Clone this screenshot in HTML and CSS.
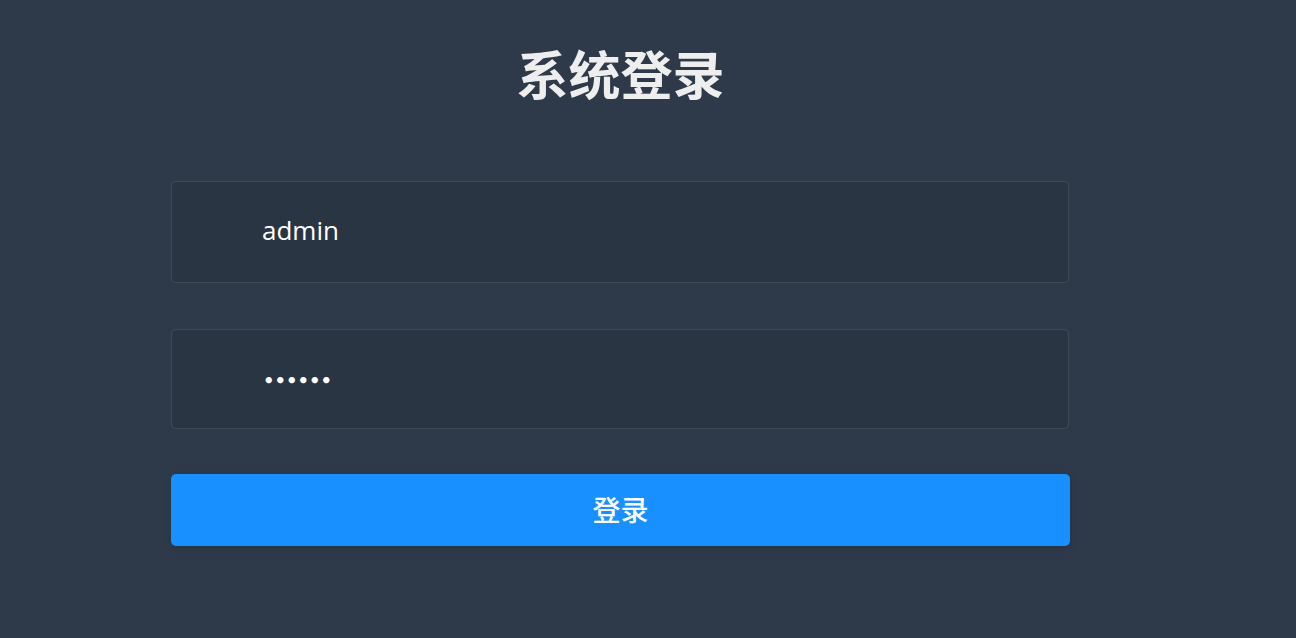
FILE: index.html
```html
<!DOCTYPE html>
<html lang="zh-CN">
<head>
    <meta charset="UTF-8">
    <meta name="viewport" content="width=device-width, initial-scale=1.0">
    <title>系统登录</title>
    <link rel="stylesheet" href="styles.css">
</head>
<body>
    <div class="login-container">
        <form class="login-form" onsubmit="return false">
            <h1 class="title">系统登录</h1>

            <div class="form-item form-item-user">
                <input type="text" name="username" value="admin" autocomplete="off">
            </div>

            <div class="form-item form-item-pass">
                <input type="password" name="password" value="123456" autocomplete="off">
            </div>

            <button type="submit" class="btn-login">登录</button>
        </form>
    </div>
</body>
</html>
```

FILE: styles.css
```css
html, body {
    margin: 0;
    padding: 0;
    height: 100%;
}

body {
    background-color: #2e3a4a;
    font-family: 'Open Sans', 'Noto Sans CJK SC', sans-serif;
    color: #fff;
}

.login-container {
    min-height: 100%;
    width: 100%;
    overflow: hidden;
}

.login-form {
    width: 899px;
    margin-left: 171px;
    padding-top: 43px;
}

.title {
    margin: 0 0 78px 0;
    font-family: 'Noto Sans CJK SC', sans-serif;
    font-size: 52px;
    line-height: 60px;
    font-weight: bold;
    color: #eee;
    text-align: center;
}

.form-item {
    width: 898px;
    box-sizing: border-box;
    border: 1px solid rgba(255, 255, 255, 0.1);
    background: rgba(0, 0, 0, 0.08);
    border-radius: 5px;
    display: flex;
    align-items: center;
}

.form-item-user {
    height: 102px;
    margin-bottom: 46px;
}

.form-item-pass {
    height: 100px;
    margin-bottom: 45px;
}

.form-item input {
    width: 100%;
    height: 100%;
    background: transparent;
    border: 0;
    outline: none;
    padding: 0 0 0 90px;
    box-sizing: border-box;
    color: #fff;
    caret-color: #fff;
    font-family: 'Open Sans', sans-serif;
    font-size: 26px;
}

.form-item-user input {
    padding-bottom: 4px;
}

.form-item-pass input {
    font-family: 'DejaVu Sans', sans-serif;
    font-size: 18px;
    font-weight: bold;
    letter-spacing: 0;
    padding-left: 91px;
    padding-top: 2px;
}

.btn-login {
    display: block;
    width: 899px;
    height: 72px;
    border: 0;
    border-radius: 5px;
    background-color: #1890ff;
    color: #fff;
    font-family: 'Noto Sans CJK SC', sans-serif;
    font-size: 28px;
    font-weight: 500;
    padding-bottom: 4px;
    cursor: pointer;
    box-shadow: 0 2px 6px rgba(0, 0, 0, 0.15);
}

.btn-login:hover {
    background-color: #40a9ff;
}
```
